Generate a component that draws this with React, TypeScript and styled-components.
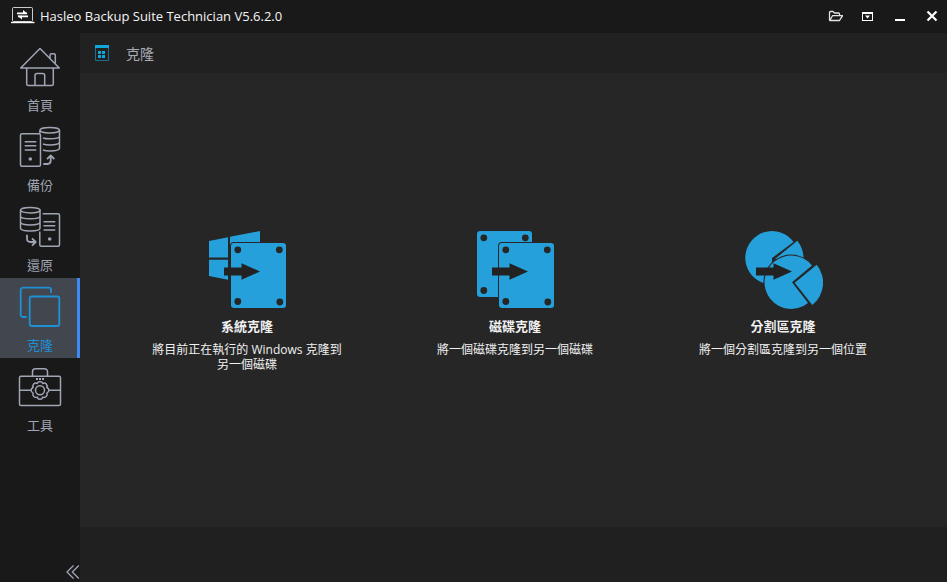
import React, { useState } from "react";
import styled, { createGlobalStyle } from "styled-components";

const BLUE = "#26a0da";
const PANEL = "#262626";
const LINE = "#a0a5b4";

const GlobalStyle = createGlobalStyle`
  * { box-sizing: border-box; }
  html, body, #root { height: 100%; }
  body {
    margin: 0;
    background: #191919;
    color: #f0f0f0;
    font-family: "Open Sans", "Noto Sans CJK TC", sans-serif;
    font-size: 12px;
  }
  button { font: inherit; color: inherit; border: 0; padding: 0; background: none; cursor: pointer; }
  svg { display: block; flex: none; }
`;

const Window = styled.div`
  display: flex;
  flex-direction: column;
  min-height: 100%;
`;

const TitleBar = styled.header`
  display: flex;
  align-items: center;
  height: 33px;
  padding: 0 0 1px 11px;
`;

const AppTitle = styled.h1`
  flex: 1;
  margin: 0 0 0 5px;
  font-size: 13px;
  font-weight: 400;
  line-height: 20px;
  color: #f4f4f4;
`;

const WindowButton = styled.button`
  display: flex;
  align-items: center;
  justify-content: center;
  width: 32px;
  height: 32px;
`;

const Body = styled.div`
  display: flex;
  flex: 1;
`;

const Sidebar = styled.nav`
  display: flex;
  flex-direction: column;
  width: 80px;
  padding-top: 5px;
`;

const NavButton = styled.button<{ $active: boolean }>`
  display: flex;
  flex-direction: column;
  align-items: center;
  height: 80px;
  padding-top: 8px;
  gap: 5px;
  font-size: 13px;
  line-height: 20px;
  color: ${(p) => (p.$active ? "#1e90d6" : LINE)};
  background: ${(p) => (p.$active ? "#42474f" : "transparent")};
  box-shadow: ${(p) => (p.$active ? "inset -3px 0 0 #3b8af5" : "none")};
`;

const CollapseButton = styled.button`
  align-self: flex-end;
  margin-top: auto;
  padding: 3px 0;
`;

const Main = styled.main`
  display: flex;
  flex: 1;
  flex-direction: column;
  background: ${PANEL};
`;

const PageHeader = styled.div`
  display: flex;
  align-items: center;
  height: 40px;
  padding: 2px 14px 0;
  gap: 16px;
  background: #212121;
`;

const PageTitle = styled.h2`
  margin: 0;
  font-size: 14px;
  font-weight: 400;
  line-height: 20px;
  color: #a8acb6;
`;

const Options = styled.div`
  display: grid;
  grid-template-columns: repeat(3, 1fr);
  align-content: center;
  flex: 1;
  padding: 2px 30px 0 33px;
`;

const OptionButton = styled.button`
  display: flex;
  flex-direction: column;
  align-items: center;
`;

const OptionTitle = styled.span`
  margin-top: 7px;
  font-size: 13px;
  font-weight: 700;
  line-height: 18px;
`;

const OptionText = styled.span`
  max-width: 200px;
  margin-top: 7px;
  line-height: 15px;
`;

const Footer = styled.footer`
  height: 55px;
  background: #202020;
`;

const NavIcon = ({ children, width = 1.5 }: { children: React.ReactNode; width?: number }) => (
  <svg width="44" height="44" viewBox="0 0 44 44" fill="none" stroke="currentColor" strokeWidth={width} strokeLinejoin="round" aria-hidden="true">
    {children}
  </svg>
);

const HomeIcon = () => (
  <NavIcon>
    <path d="M22 2.5 2.7 22H41.3Z" />
    <path d="M8.7 22V38a1.5 1.5 0 0 0 1.5 1.5H33.8a1.5 1.5 0 0 0 1.5-1.5V22" />
    <path d="M17 39.5V29.5a2 2 0 0 1 2-2h5.7a2 2 0 0 1 2 2V39.5" />
    <path d="M32 12.5V9.3a1.5 1.5 0 0 1 1.5-1.5h2.3a1.5 1.5 0 0 1 1.5 1.5V17.5" />
  </NavIcon>
);

const BackupIcon = () => (
  <NavIcon>
    <rect x="2.5" y="7.7" width="20" height="32.6" rx="1.5" />
    <path d="M6.7 15.7H18.3M6.7 19.8H18.3M6.7 24H18.3" />
    <circle cx="12.3" cy="33" r="1.8" fill="currentColor" stroke="none" />
    <ellipse cx="31.7" cy="4.2" rx="9.8" ry="2.7" />
    <path d="M21.9 4.2V7.5M41.5 4.2V22.3C41.5 24 37 25 31.7 25Q27.5 25 25 24M25 12Q27.5 12.8 31.7 12.8C37 12.8 41.5 11.8 41.5 10M25 18Q27.5 18.9 31.7 18.9C37 18.9 41.5 17.9 41.5 16" />
    <path d="M25.3 38H29.5Q32.7 38 32.7 34.5V29.8M29 33.2 32.7 29.5 36.4 33.2" strokeWidth="1.8" />
  </NavIcon>
);

const RestoreIcon = () => (
  <NavIcon>
    <ellipse cx="12.3" cy="4.2" rx="9.8" ry="2.7" />
    <path d="M2.5 4.2V22.3C2.5 24 7 25 12.3 25S22 24 22 22.3V4.2M2.5 10C2.5 11.8 7 12.8 12.3 12.8S22 11.8 22 10M2.5 16C2.5 17.9 7 18.9 12.3 18.9S22 17.9 22 16" />
    <path d="M24.7 7.7H40a1.5 1.5 0 0 1 1.5 1.5V38.8a1.5 1.5 0 0 1-1.5 1.5H23.3a1.5 1.5 0 0 1-1.5-1.5V25.5" />
    <path d="M25.5 15.7H37.3M25.5 19.8H37.3M25.5 24H37.3" />
    <circle cx="31.7" cy="33" r="1.8" fill="currentColor" stroke="none" />
    <path d="M9 28.7V32.5Q9 36 12.5 36H17.3M14 32.3 17.7 36 14 39.7" strokeWidth="1.8" />
  </NavIcon>
);

const CloneIcon = () => (
  <NavIcon width={1.8}>
    <path d="M8.7 31H5a2.3 2.3 0 0 1-2.3-2.3V4A2.3 2.3 0 0 1 5 1.7H30.7A2.3 2.3 0 0 1 33 4V7" />
    <rect x="11.7" y="10.5" width="29.6" height="29.5" rx="2" />
  </NavIcon>
);

// Eight-lobed outline of the gear on the toolbox.
const gearPath =
  Array.from({ length: 9 }, (_, i) => {
    const a = ((22.5 + i * 45) * Math.PI) / 180;
    const point = `${(22 + 7.4 * Math.cos(a)).toFixed(2)} ${(24.3 + 7.4 * Math.sin(a)).toFixed(2)}`;
    return i === 0 ? `M${point}` : `A3 3 0 0 1 ${point}`;
  }).join("") + "Z";

const ToolsIcon = () => (
  <NavIcon>
    <rect x="1.5" y="10.2" width="41" height="29.2" rx="1.5" />
    <path d="M14.5 10V5.7a3 3 0 0 1 3-3H26.5a3 3 0 0 1 3 3V10" />
    <path d="M1.5 24.3H13M31 24.3H42.5" />
    <path d={gearPath} />
    <circle cx="22" cy="24.3" r="4.5" />
    <path d="M18 13h2M21 13h2M24 13h2" strokeWidth="2" />
  </NavIcon>
);

const Arrow = ({ x = 17 }: { x?: number }) => (
  <path fill="#222" d={`M${x} 37.5h17.5v-4.2L${x + 36} 41.5 ${x + 17.5} 49.7v-4.2H${x}Z`} />
);

const Disk = ({ x, y, height }: { x: number; y: number; height: number }) => (
  <>
    <rect x={x} y={y} width="55" height={height} rx="3" fill={BLUE} stroke={PANEL} strokeWidth="2" paintOrder="stroke" />
    {[
      [6.8, 6.8],
      [48.3, 6.8],
      [6.8, height - 6.5],
      [48.8, height - 6],
    ].map(([dx, dy]) => (
      <circle key={`${dx}-${dy}`} cx={x + dx} cy={y + dy} r="3.4" fill={PANEL} />
    ))}
  </>
);

const OptionIcon = ({ children }: { children: React.ReactNode }) => (
  <svg width="80" height="80" viewBox="0 0 80 80" fill={BLUE} aria-hidden="true">
    {children}
  </svg>
);

const SystemCloneIcon = () => (
  <OptionIcon>
    <path d="M2 11 21 7.3V27.5H2ZM2 29.7H21V49.7L2 46ZM23 6.8 53 1V20H23Z" />
    <Disk x={24} y={13} height={65} />
    <Arrow />
  </OptionIcon>
);

const DiskCloneIcon = () => (
  <OptionIcon>
    <Disk x={2} y={1} height={66} />
    <Disk x={24} y={13} height={65} />
    <Arrow />
  </OptionIcon>
);

const PartitionCloneIcon = () => (
  <OptionIcon>
    <path d="M29 28 50.5 12A26.7 26.7 0 1 0 29 54.5Z" />
    <path d="M32 29 54.3 10.8A28.5 28.5 0 0 1 60.5 29Z" />
    <circle cx="48" cy="52.3" r="27.7" fill={PANEL} />
    <path d="M49 52.3 69 35.5A26.7 26.7 0 1 0 65 73Z" />
    <path d="M51.7 52.7 73.7 34.8A28.4 28.4 0 0 1 69.3 75Z" />
    <Arrow x={13} />
  </OptionIcon>
);

const LogoIcon = () => (
  <svg width="24" height="18" viewBox="0 0 24 18" fill="none" stroke="#fff" aria-hidden="true">
    <rect x="1.5" y=".5" width="20" height="14" rx="1" stroke="#ccc" />
    <path d="M0 15.5H23.500" strokeWidth="1.4" />
    <path d="M6 6.300H16M7 9.300H17" strokeWidth="1.800" />
    <path d="M12 3 16.500 6.700H12ZM11 12.500 6.500 8.800H11Z" fill="#fff" stroke="none" />
  </svg>
);

const GridIcon = () => (
  <svg width="16" height="20" viewBox="0 0 16 20" aria-hidden="true">
    <path d="M1.5 3V16.5H14.5V3" fill="none" stroke="#1b6f8c" />
    <path d="M1 1H15V4H1ZM4 7H7V10H4ZM8 7H11V10H8ZM4 11H7V14H4ZM8 11H11V14H8Z" fill="#0fa6dc" />
  </svg>
);

const controls = [
  {
    label: "開啟",
    icon: <path d="M2.5 12.500V4.5Q2.5 3.5 3.5 3.5H6L7.5 5H11.5Q12.5 5 12.5 6V7.5M2.8 12.5 5.5 7.7H15.5L12.5 12.5Z" fill="none" stroke="#e4e4e4" strokeWidth="1.3" strokeLinejoin="round" />,
  },
  {
    label: "選單",
    icon: <path d="M3 4H14V13H3ZM4 6V12H13V6ZM6 7.500H11L8.500 10.500Z" fill="#fff" fillRule="evenodd" />,
  },
  { label: "最小化", icon: <path d="M4 11H14V13H4Z" fill="#fff" /> },
  { label: "關閉", icon: <path d="M4.5 3.5 13.5 12.5M13.5 3.5 4.5 12.5" stroke="#fff" strokeWidth="2.2" /> },
];

const sections = [
  { label: "首頁", Icon: HomeIcon },
  { label: "備份", Icon: BackupIcon },
  { label: "還原", Icon: RestoreIcon },
  { label: "克隆", Icon: CloneIcon },
  { label: "工具", Icon: ToolsIcon },
];

const options = [
  { title: "系統克隆", text: "將目前正在執行的 Windows 克隆到另一個磁碟", Icon: SystemCloneIcon },
  { title: "磁碟克隆", text: "將一個磁碟克隆到另一個磁碟", Icon: DiskCloneIcon },
  { title: "分割區克隆", text: "將一個分割區克隆到另一個位置", Icon: PartitionCloneIcon },
];

export default function App() {
  const [active, setActive] = useState("克隆");
  return (
    <Window>
      <GlobalStyle />
      <TitleBar>
        <LogoIcon />
        <AppTitle>Hasleo Backup Suite Technician V5.6.2.0</AppTitle>
        {controls.map(({ label, icon }) => (
          <WindowButton key={label} type="button" aria-label={label}>
            <svg width="16" height="16" viewBox="0 0 16 16" aria-hidden="true">{icon}</svg>
          </WindowButton>
        ))}
      </TitleBar>
      <Body>
        <Sidebar>
          {sections.map(({ label, Icon }) => (
            <NavButton key={label} type="button" $active={label === active} onClick={() => setActive(label)}>
              <Icon />
              {label}
            </NavButton>
          ))}
          <CollapseButton type="button" aria-label="收合">
            <svg width="14" height="14" viewBox="0 0 14 14" fill="none" stroke={LINE} strokeWidth="1.3" aria-hidden="true">
              <path d="M7.5 .5 1 7 7.5 13.5M12.8 .5 6.3 7 12.8 13.5" />
            </svg>
          </CollapseButton>
        </Sidebar>
        <Main>
          <PageHeader>
            <GridIcon />
            <PageTitle>{active}</PageTitle>
          </PageHeader>
          <Options>
            {options.map(({ title, text, Icon }) => (
              <OptionButton key={title} type="button">
                <Icon />
                <OptionTitle>{title}</OptionTitle>
                <OptionText>{text}</OptionText>
              </OptionButton>
            ))}
          </Options>
          <Footer />
        </Main>
      </Body>
    </Window>
  );
}
